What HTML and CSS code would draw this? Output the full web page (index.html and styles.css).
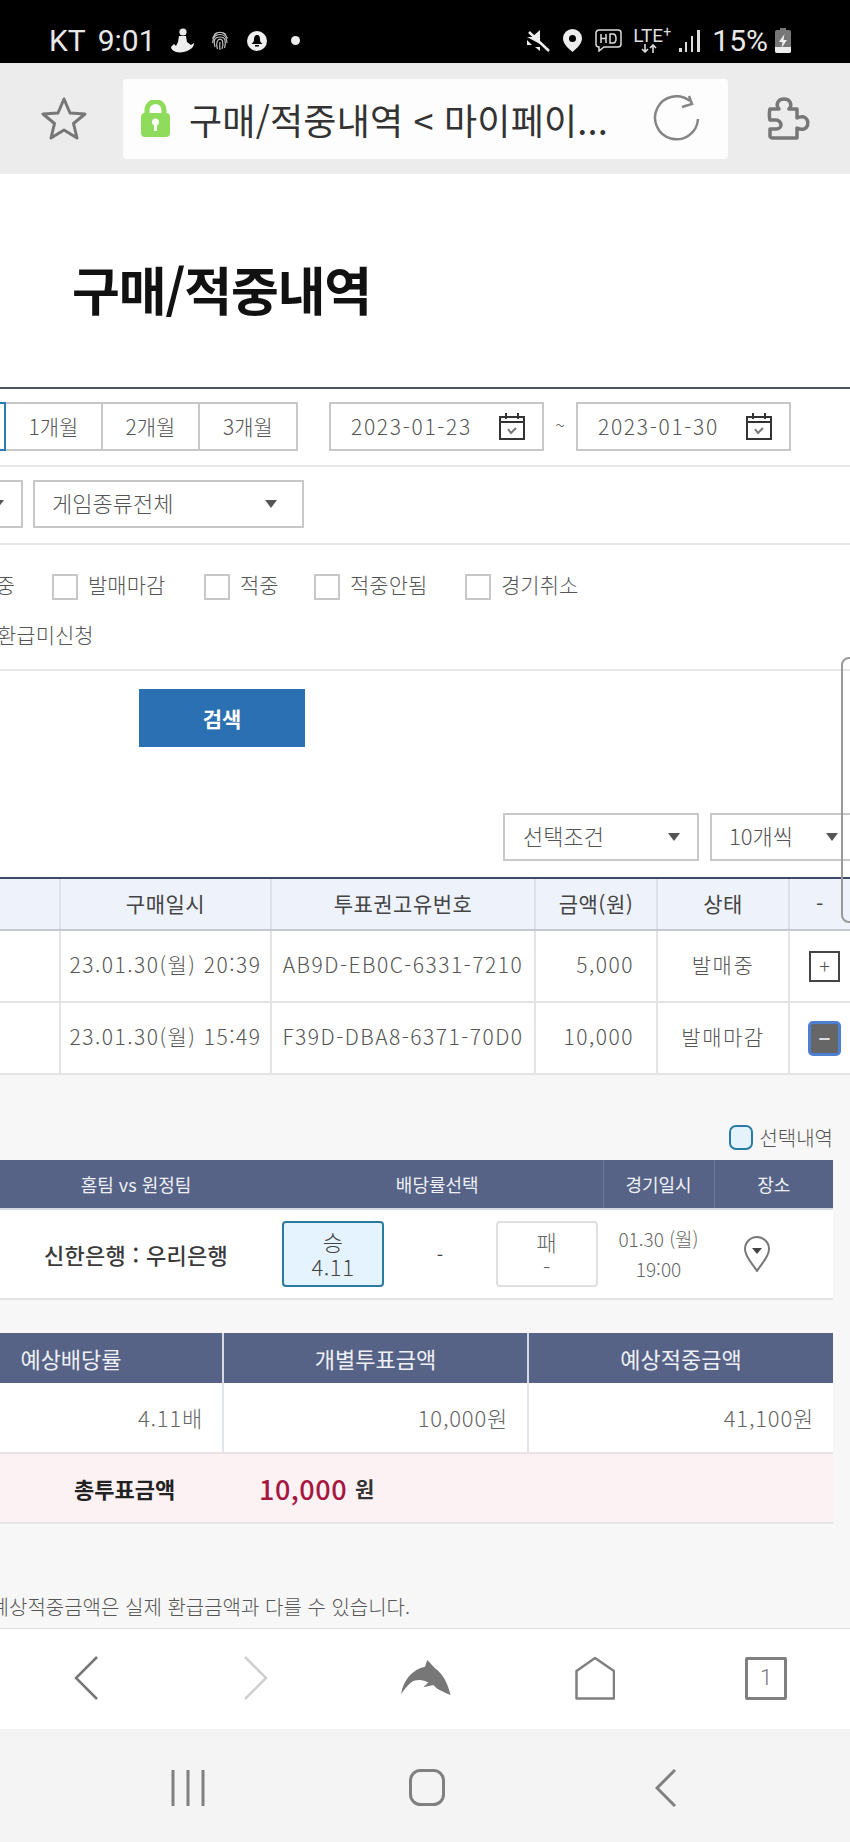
FILE: index.html
```html
<!DOCTYPE html>
<html lang="ko">
<head>
  <meta charset="UTF-8">
  <title>구매/적중내역</title>
  <link rel="stylesheet" href="styles.css">
</head>
<body>
  <div class="status-bar">
    <div class="status-left">
      <span class="status-text">KT</span>
      <span class="status-text time">9:01</span>
      <svg class="ico-figure" width="24" height="25" viewBox="0 0 24 25"><circle cx="13" cy="4" r="3.6" fill="#eee"/><path d="M9 8h7l1 6 4 3 3-2c0 4-3 6-5 7-3 2-9 3-13 2-3-1-5-3-5-5l3-3 2 2 2-4z" fill="#eee"/></svg>
      <svg class="ico-finger" width="18" height="20" viewBox="0 0 18 20" fill="none" stroke="#bbb" stroke-width="1.2"><path d="M3 3.500C6.500.5 11.500.5 15 3.500M1.500 7.500C5-.5 13-.5 16.500 7.500M1.500 12C2 5 6 3.500 9 3.500s7 2 7 8.500M4 16c-1-3-1-5-.500-7C5 5 13 5 14 9c.500 2 .500 5-.500 8M6.500 18c-1-3-1-6 0-8 1-2.500 4-2.500 5 0 .500 2 .500 5-.500 8M9 19c-.500-3-.500-5 0-8"/></svg>
      <svg class="ico-bell" width="20" height="20" viewBox="0 0 20 20"><circle cx="10" cy="10" r="10" fill="#eee"/><path d="M10 4c2.500 0 3 2 3 4.500s1 3 2.500 4.500h-11C6 11.500 7 10.500 7 8.500S7.500 4 10 4z" fill="#000"/><rect x="8" y="14" width="4" height="1.500" fill="#000"/></svg>
      <span class="status-dot"></span>
    </div>
    <div class="status-right">
      <svg class="ico-mute" width="24" height="24" viewBox="0 0 24 24"><path d="M1 8h5l8-7v14z M6 16h-5v-5z M14 18v4l-5-4z" fill="#eee"/><path d="M3 3l20 19" stroke="#eee" stroke-width="2.500"/></svg>
      <svg class="ico-pin" width="19" height="23" viewBox="0 0 19 23"><path fill-rule="evenodd" d="M9.500 0a9.500 9.500 0 0 1 9.500 9.500c0 5-5 10-9.500 13.500C5 19.500 0 14.500 0 9.500A9.500 9.500 0 0 1 9.500 0zm0 6a3.500 3.500 0 1 0 0 7 3.500 3.500 0 0 0 0-7z" fill="#eee"/></svg>
      <svg class="ico-hd" width="27" height="23" viewBox="0 0 27 23" fill="none" stroke="#ddd" stroke-width="1.500"><path d="M4 1h19a3 3 0 0 1 3 3v11a3 3 0 0 1-3 3H9l-5 4v-4a3 3 0 0 1-3-3V4a3 3 0 0 1 3-3z"/><path d="M6 5v9M6 9.500h5M11 5v9M15 5v9h3c4 0 4-9 0-9z"/></svg>
      <div class="lte">
        <span class="lte-text">LTE<sup>+</sup></span>
        <svg width="18" height="9" viewBox="0 0 18 9" fill="none" stroke="#ddd" stroke-width="1.600"><path d="M4 0v8M1 5l3 3 3-3M12 9V1M9 4l3-3 3 3"/></svg>
      </div>
      <svg class="ico-signal" width="22" height="24" viewBox="0 0 22 24" fill="#ddd"><rect x="0" y="19" width="3" height="4"/><rect x="6" y="13" width="2" height="10"/><rect x="12" y="7" width="2" height="16"/><rect x="18" y="1" width="3" height="22"/></svg>
      <span class="status-text battery-pct">15%</span>
      <svg class="ico-battery" width="16" height="25" viewBox="0 0 16 25"><path d="M5 0h6v2h3a2 2 0 0 1 2 2v19a2 2 0 0 1-2 2H2a2 2 0 0 1-2-2V4a2 2 0 0 1 2-2h3z" fill="#777"/><path d="M0 19h16v4a2 2 0 0 1-2 2H2a2 2 0 0 1-2-2z" fill="#eee"/><path d="M9.500 6L4 14h3.500l-1 6L12 12H8.500z" fill="#eee"/></svg>
    </div>
  </div>

  <div class="toolbar">
    <svg class="ico-star" width="46" height="45" viewBox="0 0 46 45" fill="none" stroke="#777" stroke-width="3" stroke-linejoin="round"><path d="M23 3l6 14 15 1-11.500 9.500L36 42l-13-8-13 8 3.500-14.500L2 18l15-1z"/></svg>
    <div class="url-box">
      <svg class="ico-lock" width="29" height="37" viewBox="0 0 29 37"><path d="M6 15V10a8.500 8.500 0 0 1 17 0v5" fill="none" stroke="#8fdc5c" stroke-width="5"/><rect y="13" width="29" height="24" rx="4" fill="#8fdc5c"/><circle cx="14.500" cy="22" r="3.500" fill="#fff"/><rect x="13" y="23" width="3" height="8" fill="#fff"/></svg>
      <span class="url-text">구매/적중내역 &lt; 마이페이...</span>
      <svg class="ico-reload" width="47" height="47" viewBox="0 0 47 47" fill="none" stroke="#858585" stroke-width="2.500"><path d="M45 24a21.500 21.500 0 1 1-8-18"/><path d="M29 12l10-3-3-8"/></svg>
    </div>
    <svg class="ico-puzzle" width="45" height="45" viewBox="0 0 45 45" fill="none" stroke="#777" stroke-width="3.500" stroke-linejoin="round"><path d="M3 13h9c-2-2-2-5-1-7 2-4 10-4 12 0 1 2 1 5-1 7h8v9c2-1 4-2 7-1 5 2 5 10 0 12-3 1-5 0-7-1v10H5c-1 0-2-1-2-2v-7h6c3 0 5-2 5-4s-2-5-5-5H3c-1-4-1-7 0-11z"/></svg>
  </div>

  <main class="page">
    <h1 class="page-title">구매/적중내역</h1>

    <div class="search-box">
      <div class="search-row">
        <div class="period-group">
          <span class="period-btn period-on"></span>
          <span class="period-btn">1개월</span>
          <span class="period-btn">2개월</span>
          <span class="period-btn">3개월</span>
        </div>
        <div class="date-input date-from">
          <span>2023-01-23</span>
          <svg class="ico-cal" width="26" height="27" viewBox="0 0 26 27" fill="none" stroke="#333" stroke-width="2"><path d="M1 4h24v22H1zM1 9h24M7 0v6M19 0v6"/><path d="M9 16l3 4 5-5" stroke="#777"/></svg>
        </div>
        <span class="tilde">~</span>
        <div class="date-input">
          <span>2023-01-30</span>
          <svg class="ico-cal" width="26" height="27" viewBox="0 0 26 27" fill="none" stroke="#333" stroke-width="2"><path d="M1 4h24v22H1zM1 9h24M7 0v6M19 0v6"/><path d="M9 16l3 4 5-5" stroke="#777"/></svg>
        </div>
      </div>

      <div class="search-row">
        <div class="select select-cut"><i class="arrow"></i></div>
        <div class="select select-game"><span>게임종류전체</span><i class="arrow"></i></div>
      </div>

      <div class="search-row check-row">
        <div class="check-line">
          <span class="check-cut">발매중</span>
          <label class="check check-a"><i class="box"></i><span>발매마감</span></label>
          <label class="check check-b"><i class="box"></i><span>적중</span></label>
          <label class="check check-c"><i class="box"></i><span>적중안됨</span></label>
          <label class="check check-d"><i class="box"></i><span>경기취소</span></label>
        </div>
        <div class="check-line">
          <span class="check-cut2">환급미신청</span>
        </div>
      </div>

      <div class="button-row">
        <button class="search-btn">검색</button>
      </div>
    </div>

    <div class="list-tools">
      <div class="select select-cond"><span>선택조건</span><i class="arrow"></i></div>
      <div class="select select-count"><span>10개씩</span><i class="arrow"></i></div>
    </div>

    <table class="list-table">
      <colgroup>
        <col class="c-no"><col class="c-date"><col class="c-code"><col class="c-amt"><col class="c-state"><col>
      </colgroup>
      <thead>
        <tr><th></th><th>구매일시</th><th>투표권고유번호</th><th>금액(원)</th><th>상태</th><th>-</th></tr>
      </thead>
      <tbody>
        <tr>
          <td></td><td>23.01.30(월) 20:39</td><td>AB9D-EB0C-6331-7210</td><td class="amt">5,000</td><td>발매중</td>
          <td><span class="toggle">+</span></td>
        </tr>
        <tr>
          <td></td><td>23.01.30(월) 15:49</td><td>F39D-DBA8-6371-70D0</td><td class="amt">10,000</td><td>발매마감</td>
          <td><span class="toggle toggle-open">−</span></td>
        </tr>
      </tbody>
    </table>

    <div class="detail">
      <div class="legend"><i class="legend-box"></i>선택내역</div>

      <table class="match-table">
        <colgroup>
          <col class="c-team"><col class="c-odds"><col class="c-time"><col>
        </colgroup>
        <thead>
          <tr><th>홈팀 vs 원정팀</th><th>배당률선택</th><th class="line">경기일시</th><th class="line">장소</th></tr>
        </thead>
        <tbody>
          <tr>
            <td class="team">신한은행 : 우리은행</td>
            <td>
              <div class="odds">
                <div class="odd odd-on"><span>승</span><span>4.11</span></div>
                <span class="odd-dash">-</span>
                <div class="odd"><span>패</span><span>-</span></div>
              </div>
            </td>
            <td class="match-time">01.30 (월)<br>19:00</td>
            <td>
              <svg class="ico-place" width="26" height="36" viewBox="0 0 26 36" fill="none" stroke="#777" stroke-width="2"><path d="M13 35C8 27 1 21 1 13a12 12 0 0 1 24 0c0 8-7 14-12 22z"/><path d="M8 12h10l-5 6z" fill="#444" stroke="none"/></svg>
            </td>
          </tr>
        </tbody>
      </table>

      <table class="sum-table">
        <colgroup>
          <col class="c-rate"><col class="c-each"><col>
        </colgroup>
        <thead>
          <tr><th>예상배당률</th><th>개별투표금액</th><th>예상적중금액</th></tr>
        </thead>
        <tbody>
          <tr><td>4.11배</td><td>10,000원</td><td>41,100원</td></tr>
        </tbody>
      </table>

      <div class="total">
        <strong class="total-label">총투표금액</strong>
        <span class="total-num">10,000</span>
        <strong class="total-unit">원</strong>
      </div>

      <p class="note"><span>예상적중금액은 실제 환급금액과 다를 수 있습니다.</span></p>
    </div>

    <div class="side-handle"></div>
  </main>

  <div class="browser-bar">
    <svg class="nav-back" width="24" height="44" viewBox="0 0 24 44" fill="none" stroke="#777" stroke-width="2.500"><path d="M23 1L2 22l21 21"/></svg>
    <svg class="nav-forward" width="24" height="44" viewBox="0 0 24 44" fill="none" stroke="#cfcfcf" stroke-width="2.500"><path d="M1 1l21 21L1 43"/></svg>
    <svg class="nav-dolphin" width="50" height="36" viewBox="0 0 50 36"><path d="M0 34.500C2 20 12 9 24 6.700L26.300 0 34 8.300C42 14 47 24 49.500 35L44 32.700C41 31 38 30 35.700 28.300L32.300 25 22.300 27.300 27.300 22.500C22 19.500 15 19 10 22.500 6 26 2.500 30 0 34.500z" fill="#777"/></svg>
    <svg class="nav-home" width="40" height="44" viewBox="0 0 40 44" fill="none" stroke="#808080" stroke-width="2.500"><path d="M20 2L39 15v27.500H1.500V15z" stroke-linejoin="round"/></svg>
    <div class="nav-tabs">1</div>
  </div>

  <div class="system-nav">
    <svg class="sys-recent" width="34" height="36" viewBox="0 0 34 36" stroke="#808080" stroke-width="3"><path d="M2 0v36M17 0v36M32 0v36"/></svg>
    <svg class="sys-home" width="36" height="37" viewBox="0 0 36 37" fill="none" stroke="#808080" stroke-width="3"><rect x="1.500" y="1.500" width="33" height="34" rx="10"/></svg>
    <svg class="sys-back" width="21" height="38" viewBox="0 0 21 38" fill="none" stroke="#808080" stroke-width="3"><path d="M20 1L2 19l18 18"/></svg>
  </div>
</body>
</html>
```

FILE: styles.css
```css
* {
  box-sizing: border-box;
}

html, body {
  margin: 0;
  padding: 0;
}

body {
  width: 850px;
  height: 1842px;
  overflow: hidden;
  display: flex;
  flex-direction: column;
  font-family: "Noto Sans CJK KR", "Noto Sans", sans-serif;
  font-weight: 300;
  color: #555;
  background-color: #fff;
}

svg {
  display: block;
  flex: none;
}

/* status bar */
.status-bar {
  height: 63px;
  flex: none;
  background-color: #000;
  display: flex;
  justify-content: space-between;
  align-items: center;
  padding: 18px 59px 0 49px;
  font-family: Roboto, sans-serif;
  font-weight: 400;
}

.status-left, .status-right {
  display: flex;
  align-items: center;
}

.status-text {
  font-size: 30px;
  line-height: 36px;
  color: #e8e8e8;
}

.time {
  margin-left: 12px;
}

.ico-figure {
  margin-left: 14px;
}

.ico-finger {
  margin-left: 17px;
}

.ico-bell {
  margin-left: 18px;
}

.status-dot {
  width: 9px;
  height: 9px;
  margin-left: 24px;
  border-radius: 50%;
  background-color: #eee;
}

.ico-pin {
  margin-left: 13px;
}

.ico-hd {
  margin-left: 13px;
}

.lte {
  margin-left: 11px;
  width: 43px;
  display: flex;
  flex-direction: column;
  align-items: flex-start;
}

.lte svg {
  margin-left: 8px;
}

.lte-text {
  font-size: 19px;
  line-height: 16px;
  color: #ddd;
}

.lte-text sup {
  font-size: 14px;
  line-height: 0;
  vertical-align: 5px;
}

.ico-signal {
  margin-left: 3px;
}

.battery-pct {
  margin-left: 11px;
}

.ico-battery {
  margin-left: 7px;
}

/* browser toolbar */
.toolbar {
  height: 111px;
  flex: none;
  background-color: #ececec;
  display: flex;
  align-items: center;
  padding-left: 41px;
}

.url-box {
  width: 605px;
  height: 80px;
  margin-left: 36px;
  border-radius: 4px;
  background-color: #fdfdfd;
  display: flex;
  align-items: center;
  padding-left: 18px;
}

.url-text {
  width: 464px;
  margin-left: 19px;
  font-size: 36px;
  font-weight: 400;
  line-height: 46px;
  letter-spacing: 0.2px;
  color: #333;
  white-space: nowrap;
}

.ico-puzzle {
  margin-left: 39px;
}

/* page */
.page {
  position: relative;
  flex: 1;
  min-height: 0;
  overflow: hidden;
  background-color: #fff;
}

.page-title {
  height: 213px;
  margin: 0;
  padding: 84px 0 0 72px;
  font-size: 52px;
  line-height: 62px;
  font-weight: 700;
  letter-spacing: -1.2px;
  color: #111;
}

.search-box {
  border-top: 2px solid #4f5763;
}

.search-row {
  height: 78px;
  padding-top: 13px;
  display: flex;
  border-bottom: 2px solid #e6e6e6;
}

.period-group {
  display: flex;
  height: 49px;
}

.period-btn {
  width: 97px;
  border: 2px solid #c8c8c8;
  border-left: none;
  font-size: 21px;
  line-height: 44px;
  text-align: center;
}

.period-btn:last-child {
  width: 98px;
}

.period-btn.period-on {
  width: 6px;
  border: 2px solid #2b7ab0;
  border-left: none;
}

.date-input {
  width: 215px;
  height: 49px;
  padding: 0 17px 2px 20px;
  display: flex;
  justify-content: space-between;
  align-items: center;
  border: 2px solid #c8c8c8;
  font-size: 21px;
  letter-spacing: 1.7px;
}

.date-input svg {
  margin-top: 2px;
}

.date-from {
  margin-left: 31px;
}

.tilde {
  width: 32px;
  text-align: center;
  font-size: 18px;
  line-height: 44px;
}

.select {
  height: 48px;
  padding-bottom: 4px;
  display: flex;
  align-items: center;
  justify-content: space-between;
  border: 2px solid #c8c8c8;
  font-size: 22px;
}

.arrow {
  width: 0;
  height: 0;
  margin-top: 4px;
  border-left: 6px solid transparent;
  border-right: 6px solid transparent;
  border-top: 8px solid #555;
}

.select-cut {
  width: 23px;
  border-left: none;
  padding-left: 0;
  margin-right: 10px;
  justify-content: flex-start;
}

.select-cut .arrow {
  margin-left: -8px;
}

.select-game {
  width: 271px;
  padding-left: 17px;
  padding-right: 25px;
}

.check-row {
  height: 126px;
  padding-top: 29px;
  display: block;
}

.check-line {
  position: relative;
  display: flex;
  height: 25px;
  align-items: center;
  margin-bottom: 25px;
  font-size: 21px;
  line-height: 25px;
}

.check {
  display: flex;
  align-items: center;
}

.check span, .check-cut, .check-cut2 {
  margin-top: -4px;
}

.box {
  width: 26px;
  height: 26px;
  margin-right: 10px;
  border: 2px solid #c8c8c8;
  background-color: #fff;
}

.check-cut {
  margin-left: -43px;
  width: 95px;
  white-space: nowrap;
}

.check-a {
  width: 152px;
}

.check-b {
  width: 110px;
}

.check-c {
  width: 151px;
}

.check-cut2 {
  margin-left: -3px;
}

.button-row {
  padding: 18px 0 0 139px;
}

.search-btn {
  display: block;
  width: 166px;
  height: 58px;
  border: none;
  background-color: #2b70b2;
  color: #fff;
  font-family: inherit;
  font-size: 21px;
  font-weight: 700;
}

.list-tools {
  display: flex;
  justify-content: flex-end;
  gap: 11px;
  margin: 66px -6px 16px 0;
}

.select-cond {
  width: 196px;
  padding-left: 18px;
  padding-right: 17px;
}

.select-count {
  width: 146px;
  padding-left: 17px;
  padding-right: 16px;
}

/* purchase list */
.list-table {
  width: 850px;
  table-layout: fixed;
  border-collapse: collapse;
  background-color: #fff;
}

.c-no {
  width: 60px;
}

.c-date {
  width: 211px;
}

.c-code {
  width: 264px;
}

.c-amt {
  width: 122px;
}

.c-state {
  width: 132px;
}

.list-table th {
  height: 52px;
  padding: 0 0 2px;
  background-color: #eef2fb;
  border-top: 2px solid #3d4a66;
  border-bottom: 2px solid #c6c9d0;
  border-left: 2px solid #dde0e6;
  font-size: 21px;
  font-weight: 400;
  color: #444;
  letter-spacing: 0.5px;
}

.list-table th:first-child, .list-table td:first-child {
  border-left: none;
}

.list-table td {
  height: 72px;
  padding: 0 0 4px;
  border-bottom: 2px solid #e4e4e4;
  border-left: 2px solid #e4e4e4;
  font-size: 21px;
  text-align: center;
  letter-spacing: 1.5px;
  white-space: nowrap;
  color: #555;
}

.list-table td.amt {
  text-align: right;
  padding-right: 22px;
}

.toggle {
  display: block;
  width: 31px;
  height: 31px;
  margin: 4px 0 0 19px;
  border: 2px solid #444;
  font-size: 20px;
  line-height: 25px;
  letter-spacing: 0;
  text-align: center;
}

.toggle-open {
  width: 33px;
  height: 35px;
  margin-left: 18px;
  border: 3px solid #4f7fd0;
  border-radius: 5px;
  background-color: #666;
  color: #ddd;
  font-weight: 700;
  line-height: 27px;
}

/* detail */
.detail {
  height: 555px;
  padding-top: 50px;
  background-color: #f7f7f7;
}

.legend {
  width: 833px;
  height: 25px;
  display: flex;
  justify-content: flex-end;
  align-items: center;
  margin-bottom: 10px;
  font-size: 20px;
}

.legend-box {
  width: 24px;
  height: 25px;
  margin-right: 6px;
  border: 2px solid #2b7aa5;
  border-radius: 7px;
  background-color: #e4f2fc;
}

.match-table, .sum-table {
  width: 833px;
  table-layout: fixed;
  border-collapse: collapse;
  background-color: #fff;
}

.c-team {
  width: 272px;
}

.c-odds {
  width: 331px;
}

.c-time {
  width: 111px;
}

.match-table th {
  height: 49px;
  padding: 0;
  background-color: #566386;
  border-bottom: 2px solid #d6d9e0;
  color: #eef0f5;
  font-size: 18px;
  font-weight: 400;
}

.match-table th.line {
  border-left: 1px solid #6d7997;
}

.match-table td {
  height: 90px;
  padding: 0;
  border-bottom: 2px solid #e4e4e4;
  text-align: center;
}

.match-table .team {
  font-size: 22px;
  font-weight: 500;
  letter-spacing: 0.3px;
  color: #3a3a3a;
}

.odds {
  display: flex;
  justify-content: space-between;
  align-items: center;
  padding: 0 5px 0 10px;
}

.odd {
  width: 102px;
  height: 66px;
  padding-top: 6px;
  display: flex;
  flex-direction: column;
  border: 2px solid #e0e0e0;
  border-radius: 4px;
  background-color: #fff;
  font-size: 22px;
  line-height: 25px;
  letter-spacing: 0.5px;
  color: #666;
}

.odd-on {
  border-color: #2b7a9f;
  background-color: #e4f3fd;
  color: #444;
}

.odd-dash {
  font-size: 18px;
  font-weight: 400;
  color: #444;
}

.match-table .match-time {
  font-size: 19px;
  line-height: 30px;
  color: #666;
}

.ico-place {
  margin-left: 30px;
}

.sum-table {
  margin-top: 33px;
}

.c-rate {
  width: 223px;
}

.c-each {
  width: 305px;
}

.sum-table th {
  height: 50px;
  padding: 0;
  background-color: #566386;
  border-left: 2px solid #d6d9e0;
  color: #eef0f5;
  font-size: 22px;
  font-weight: 400;
}

.sum-table th:first-child {
  padding-right: 80px;
}

.sum-table td {
  height: 69px;
  padding: 0 19px 2px 0;
  border-left: 2px solid #e0e3ea;
  text-align: right;
  font-size: 22px;
  letter-spacing: 0.8px;
  color: #666;
}

.sum-table th:first-child, .sum-table td:first-child {
  border-left: none;
}

.total {
  width: 833px;
  height: 72px;
  display: flex;
  align-items: center;
  border-top: 2px solid #e8e4e6;
  border-bottom: 2px solid #e4e4e4;
  background-color: #fcf1f3;
}

.total-label {
  width: 259px;
  padding-left: 74px;
  white-space: nowrap;
  font-size: 22px;
  font-weight: 700;
  color: #222;
}

.total-num {
  font-size: 27px;
  font-weight: 500;
  color: #a5173f;
  letter-spacing: 0.5px;
}

.total-unit {
  margin-left: 8px;
  font-size: 21px;
  font-weight: 700;
  color: #333;
}

.note {
  width: 410px;
  display: flex;
  justify-content: flex-end;
  margin: 70px 0 0;
  font-size: 20px;
  line-height: 26px;
  color: #555;
  white-space: nowrap;
}

.side-handle {
  position: absolute;
  left: 841px;
  top: 483px;
  width: 20px;
  height: 266px;
  border: 2px solid #9a9a9a;
  border-radius: 8px;
}

/* browser bottom bar */
.browser-bar {
  height: 101px;
  flex: none;
  display: flex;
  align-items: center;
  padding: 0 0 2px 74px;
  background-color: #fff;
  border-top: 1px solid #ddd;
}

.nav-forward {
  margin-left: 146px;
}

.nav-dolphin {
  margin-left: 133px;
}

.nav-home {
  margin-left: 124px;
}

.nav-tabs {
  width: 42px;
  height: 43px;
  margin-left: 130px;
  border: 3px solid #808080;
  border-radius: 2px;
  font-family: Roboto, sans-serif;
  font-weight: 300;
  font-size: 22px;
  line-height: 36px;
  text-align: center;
  color: #777;
}

/* android nav */
.system-nav {
  height: 113px;
  flex: none;
  display: flex;
  align-items: center;
  padding: 4px 0 0 171px;
  background-color: #f4f4f4;
}

.sys-home {
  margin-left: 204px;
}

.sys-back {
  margin-left: 210px;
}
```
